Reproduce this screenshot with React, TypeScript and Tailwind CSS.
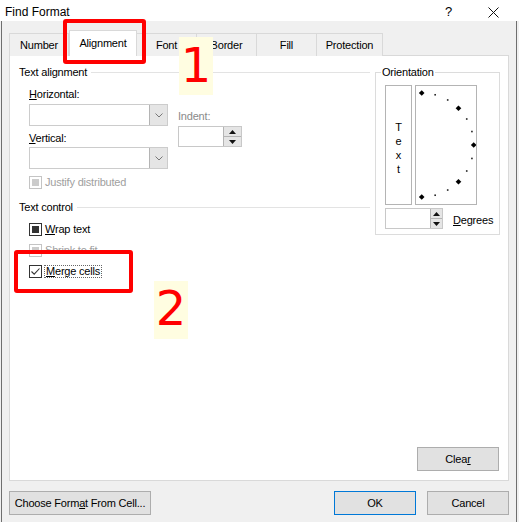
import React from "react";

type CheckState = "fill" | "checked" | "disabled";

const tabs = [
  { label: "Number", w: "w-[60px]" },
  { label: "Alignment", w: "w-[68px]", active: true },
  { label: "Font", w: "w-[60px]" },
  { label: "Border", w: "w-[60px]" },
  { label: "Fill", w: "w-[60px]" },
  { label: "Protection", w: "w-[66px]" },
];

const CheckBox = ({ state }: { state: CheckState }) => (
  <div
    className={`w-[13px] h-[13px] border bg-white flex items-center justify-center ${
      state === "disabled" ? "border-[#c4c4c4]" : "border-[#333333]"
    }`}
  >
    {state === "fill" && <div className="w-[7px] h-[7px] bg-[#333333]" />}
    {state === "disabled" && <div className="w-[7px] h-[7px] bg-[#cccccc]" />}
    {state === "checked" && (
      <svg width="11" height="11" viewBox="0 0 11 11">
        <path d="M1.5 5.5 L4.2 8.2 L9.5 2.5" fill="none" stroke="#333" strokeWidth="1.1" />
      </svg>
    )}
  </div>
);

const Combo = () => (
  <div className="w-[139px] h-[22px] border border-[#cccccc] bg-white flex justify-end">
    <div className="w-[18px] h-full bg-[#e5e5e5] border-l border-[#b4b4b4] flex items-center justify-center">
      <svg width="8" height="5" viewBox="0 0 8 5">
        <path d="M0.5 0.5 L4 4 L7.5 0.5" fill="none" stroke="#777" strokeWidth="1" />
      </svg>
    </div>
  </div>
);

const Spin = ({ w, bw }: { w: string; bw: string }) => (
  <div className={`${w} h-[21px] border border-[#c8c8c8] bg-white flex justify-end`}>
    <div className={`${bw} h-full flex flex-col bg-[#e5e5e5] border-l border-[#b4b4b4]`}>
      <div className="flex-1 flex items-center justify-center border-b border-[#b4b4b4]">
        <svg width="7" height="4" viewBox="0 0 7 4">
          <path d="M0 4 L3.5 0 L7 4 Z" fill="#111" />
        </svg>
      </div>
      <div className="flex-1 flex items-center justify-center">
        <svg width="7" height="4" viewBox="0 0 7 4">
          <path d="M0 0 L3.5 4 L7 0 Z" fill="#111" />
        </svg>
      </div>
    </div>
  </div>
);

const Dial = () => {
  const cx = 5.7;
  const cy = 59;
  const r = 52;
  const dots = [];
  for (let i = 0; i <= 12; i++) {
    const deg = 90 - i * 15;
    const a = (deg * Math.PI) / 180;
    const x = cx + r * Math.cos(a);
    const y = cy - r * Math.sin(a);
    const big = deg % 45 === 0;
    dots.push(
      big ? (
        <rect key={i} x={x - 2} y={y - 2} width="4" height="4" transform={`rotate(45 ${x} ${y})`} fill="#000" />
      ) : (
        <rect key={i} x={x - 0.8} y={y - 0.8} width="1.6" height="1.6" fill="#222" />
      )
    );
  }
  return (
    <svg width="60" height="118" viewBox="0 0 60 118">
      {dots}
    </svg>
  );
};

const Button = ({ children, w, primary }: { children: React.ReactNode; w: string; primary?: boolean }) => (
  <div
    className={`${w} h-[24px] bg-[#e1e1e1] border flex items-center justify-center ${
      primary ? "border-[#0078d7]" : "border-[#adadad]"
    }`}
  >
    {children}
  </div>
);

const Legend = ({ text }: { text: string }) => (
  <div className="h-[14px] flex items-center">
    <span>{text}</span>
    <div className="flex-1 h-px bg-[#e3e3e3] ml-[4px]" />
  </div>
);

const App = () => {
  return (
    <div className="w-[519px] h-[522px] bg-[#f0f0f0] relative overflow-hidden font-['Liberation_Sans',Arial,sans-serif] text-[11px] tracking-[-0.2px] text-[#000] leading-[14px]">
      {/* title bar */}
      <div className="h-[21px] bg-white flex items-center pl-[5px] pr-[20px] pt-[3px]">
        <span className="text-[12px] tracking-normal">Find Format</span>
        <span className="ml-auto text-[13px]">?</span>
        <svg className="ml-[36px]" width="11" height="11" viewBox="0 0 11 11">
          <path d="M0.5 0.5 L10.5 10.5 M10.5 0.5 L0.5 10.5" stroke="#111" strokeWidth="1" />
        </svg>
      </div>

      <div className="ml-[1px] mr-[2px] h-[501px] border-x border-[#6f6f6f] pl-[7px] pt-[10px]">
        {/* tabs */}
        <div className="flex items-end h-[25px] -mb-px relative z-10">
          {tabs.map((t) =>
            t.active ? (
              <div
                key={t.label}
                className={`${t.w} h-[26px] bg-white border-x border-t border-[#d9d9d9] flex items-center justify-center pb-[2px]`}
              >
                {t.label}
              </div>
            ) : (
              <div
                key={t.label}
                className={`${t.w} h-[23px] bg-[#f0f0f0] border-t border-r first:border-l border-[#d9d9d9] flex items-center justify-center`}
              >
                {t.label}
              </div>
            )
          )}
        </div>

        {/* panel */}
        <div className="w-[500px] h-[426px] bg-white border border-[#d9d9d9] flex flex-col">
          <div className="flex pl-[9px] pt-[9px]">
            {/* left column */}
            <div className="w-[351px]">
              <Legend text="Text alignment" />
              <div className="flex pl-[10px] mt-[8px]">
                <div className="w-[149px]">
                  <div className="h-[14px]">
                    <u>H</u>orizontal:
                  </div>
                  <div className="mt-[3px]">
                    <Combo />
                  </div>
                  <div className="h-[14px] mt-[5px]">
                    <u>V</u>ertical:
                  </div>
                  <div className="mt-[2px]">
                    <Combo />
                  </div>
                </div>
                <div className="pt-[22px]">
                  <div className="h-[14px] text-[#8a8a8a]">Indent:</div>
                  <div className="mt-[3px]">
                    <Spin w="w-[64px]" bw="w-[18px]" />
                  </div>
                </div>
              </div>
              <div className="flex items-center gap-[3px] pl-[10px] mt-[6px] h-[14px] text-[#a0a0a0]">
                <CheckBox state="disabled" />
                <span>Justify distributed</span>
              </div>

              <div className="mt-[11px]">
                <Legend text="Text control" />
              </div>
              <div className="flex items-center gap-[3px] pl-[10px] mt-[8px] h-[14px]">
                <CheckBox state="fill" />
                <span>
                  <u>W</u>rap text
                </span>
              </div>
              <div className="flex items-center gap-[3px] pl-[10px] mt-[7px] h-[14px] text-[#a0a0a0]">
                <CheckBox state="disabled" />
                <span>Shrink to fit</span>
              </div>
              <div className="flex items-center gap-[2px] pl-[10px] mt-[7px] h-[14px]">
                <CheckBox state="checked" />
                <span className="border border-dotted border-[#666] px-[1px] leading-[11px]">
                  <u>M</u>erge cells
                </span>
              </div>
            </div>

            {/* orientation */}
            <div className="ml-[5px] mt-[7px] w-[125px] h-[163px] border border-[#dcdcdc] relative pl-[9px] pt-[12px]">
              <span className="absolute left-[5px] -top-[8px] bg-white px-[1px]">Orientation</span>
              <div className="flex gap-[3px]">
                <div className="w-[27px] h-[120px] border border-[#b4b4b4] flex flex-col items-center justify-center leading-[14px] pt-[6px]">
                  <span>T</span>
                  <span>e</span>
                  <span>x</span>
                  <span>t</span>
                </div>
                <div className="w-[62px] h-[120px] border border-[#b4b4b4]">
                  <Dial />
                </div>
              </div>
              <div className="flex items-center mt-[3px]">
                <Spin w="w-[58px]" bw="w-[12px]" />
                <span className="ml-[10px] pt-[2px]">
                  <u>D</u>egrees
                </span>
              </div>
            </div>
          </div>

          <div className="mt-auto flex justify-end pr-[9px] pb-[9px]">
            <Button w="w-[82px]">
              Clea<u>r</u>
            </Button>
          </div>
        </div>

        {/* bottom buttons */}
        <div className="flex justify-between w-[500px] mt-[10px]">
          <Button w="w-[142px]">
            Choose Form<u>a</u>t From Cell...
          </Button>
          <div className="flex gap-[11px]">
            <Button w="w-[82px]" primary>
              OK
            </Button>
            <Button w="w-[82px]">Cancel</Button>
          </div>
        </div>
      </div>

      {/* annotations */}
      <div className="absolute left-[63px] top-[19px] w-[83px] h-[45px] border-[4px] border-[#ff0000] rounded-[3px] z-20" />
      <div className="absolute left-[179px] top-[37px] w-[34px] h-[58px] bg-[#fffde1] z-20 flex items-center justify-center font-['DejaVu_Sans',sans-serif] text-[48px] tracking-normal leading-none text-[#ff0000] pb-[3px]">
        1
      </div>
      <div className="absolute left-[14px] top-[250px] w-[119px] h-[43px] border-[4px] border-[#ff0000] rounded-[3px] z-20" />
      <div className="absolute left-[154px] top-[281px] w-[34px] h-[58px] bg-[#fffde1] z-20 flex items-center justify-center font-['DejaVu_Sans',sans-serif] text-[48px] tracking-normal leading-none text-[#ff0000] pb-[4px]">
        2
      </div>
    </div>
  );
};

export default App;
